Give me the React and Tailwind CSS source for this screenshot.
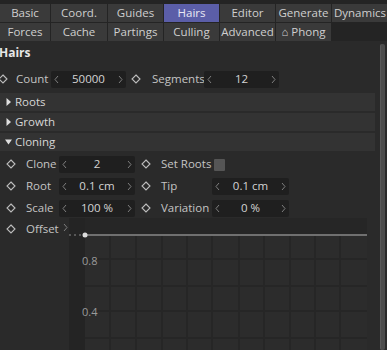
import React from 'react';

const font = { fontFamily: '"Open Sans", "Noto Sans", sans-serif' };

const row1 = [
  { label: 'Basic', w: 'w-[50px]' },
  { label: 'Coord.', w: 'w-[56px]' },
  { label: 'Guides', w: 'w-[55px]' },
  { label: 'Hairs', w: 'w-[55px]', active: true },
  { label: 'Editor', w: 'w-[55px]' },
  { label: 'Generate', w: 'w-[55px]' },
  { label: 'Dynamics', w: 'w-[56px]' },
];

const row2 = [
  { label: 'Forces', w: 'w-[50px]' },
  { label: 'Cache', w: 'w-[56px]' },
  { label: 'Partings', w: 'w-[55px]' },
  { label: 'Culling', w: 'w-[55px]' },
  { label: 'Advanced', w: 'w-[55px]' },
  { label: '\u2302 Phong', w: 'w-[55px]' },
];

function Tab({ label, w, active }) {
  return (
    <div
      className={`${w} h-[18px] shrink-0 flex items-center justify-center text-[11.5px] leading-none ${
        active ? 'bg-[#5b5ea8] text-[#e8e8f4]' : 'bg-[#3a3a3a] text-[#cfcfcf]'
      }`}
    >
      {label}
    </div>
  );
}

function Diamond() {
  return (
    <svg width="10" height="10" viewBox="0 0 10 10" className="shrink-0">
      <path d="M5 1 L9 5 L5 9 L1 5 Z" fill="none" stroke="#bdbdbd" strokeWidth="1.1" />
    </svg>
  );
}

function Chevron({ right }) {
  return (
    <svg width="5" height="9" viewBox="0 0 5 9" className="shrink-0">
      <path d={right ? 'M1 1 L4 4.5 L1 8' : 'M4 1 L1 4.5 L4 8'} fill="none" stroke="#7e7e7e" strokeWidth="1" />
    </svg>
  );
}

function Field({ value, w = 'w-[76px]' }) {
  return (
    <div className={`${w} h-[17px] shrink-0 rounded-[2px] bg-[#1f1f1f] flex items-center justify-between px-[3px] text-[11.5px] text-[#d4d4d4]`}>
      <Chevron />
      <span>{value}</span>
      <Chevron right />
    </div>
  );
}

function Group({ label, open }) {
  return (
    <div className="h-[18px] w-[375px] bg-[#333333] flex items-center pl-[5px] gap-[3px] text-[11.5px] text-[#d6d6d6]">
      <svg width="7" height="8" viewBox="0 0 7 8">
        {open ? <path d="M0 1.5 L7 1.5 L3.5 6.5 Z" fill="#e0e0e0" /> : <path d="M1.5 0 L6 4 L1.5 8 Z" fill="#e0e0e0" />}
      </svg>
      <span>{label}</span>
    </div>
  );
}

function Graph() {
  const vx = [41, 67, 93, 118, 143, 170, 195, 221, 246, 271];
  const hy = [41, 68, 93, 120];
  return (
    <svg width="298" height="133" viewBox="0 0 298 133" className="block">
      <rect x="0" y="0" width="298" height="133" fill="#2c2c2c" />
      <rect x="16" y="0" width="282" height="16" fill="#262626" />
      {vx.map((x) => (
        <rect key={x} x={x - 1} y="18" width="2" height="115" fill="#262626" />
      ))}
      {hy.map((y) => (
        <rect key={y} x="16" y={y - 1} width="282" height="2" fill="#262626" />
      ))}
      <rect x="0" y="0" width="16" height="133" fill="#242424" />
      <line x1="16" y1="17" x2="298" y2="17" stroke="#b4b4b4" strokeWidth="1" />
      <line x1="0" y1="17" x2="13" y2="17" stroke="#8a8a8a" strokeWidth="1" strokeDasharray="2 3" />
      <circle cx="16" cy="17" r="2.5" fill="#dcdcdc" />
      <text x="13" y="47" fill="#9a9a9a" fontSize="11" style={font}>0.8</text>
      <text x="13" y="98" fill="#9a9a9a" fontSize="11" style={font}>0.4</text>
    </svg>
  );
}

export default function App() {
  return (
    <div className="w-[387px] h-[350px] overflow-hidden bg-[#2a2a2a] text-[#c4c4c4] relative" style={font}>
      {/* tabs */}
      <div className="bg-[#242424] pt-[4px] flex flex-col gap-px">
        <div className="flex gap-px">
          {row1.map((t) => <Tab key={t.label} {...t} />)}
        </div>
        <div className="flex gap-px">
          {row2.map((t) => <Tab key={t.label} {...t} />)}
        </div>
      </div>

      {/* scrollbar */}
      <div className="absolute right-[2px] top-[44px] bottom-0 w-[5px] rounded-[2px] bg-[#4c4c4c] border-l border-[#5a5a5a]" />

      <div className="pt-[3px]">
        <div className="h-[18px] flex items-center -ml-[1px] text-[12px] font-bold text-[#e6e6e6]">Hairs</div>

        {/* count row */}
        <div className="h-[22px] flex items-center -ml-[2px] mt-[6px] text-[11.5px]">
          <Diamond />
          <span className="ml-[8px] w-[35px]">Count</span>
          <Field value="50000" w="w-[75px]" />
          <span className="ml-[5px]"><Diamond /></span>
          <span className="ml-[11px] w-[52px]">Segments</span>
          <Field value="12" w="w-[75px]" />
        </div>

        <div className="flex flex-col gap-[2px] mt-[3px]">
          <Group label="Roots" />
          <Group label="Growth" />
          <Group label="Cloning" open />
        </div>

        <div className="flex flex-col mt-[2px] text-[11.5px]">
          <div className="h-[22px] flex items-center pl-[6px]">
            <Diamond />
            <span className="ml-[10px] w-[33px]">Clone</span>
            <Field value="2" />
            <span className="ml-[6px]"><Diamond /></span>
            <span className="ml-[10px] w-[53px]">Set Roots</span>
            <div className="w-[11px] h-[12px] mt-[2px] rounded-[1px] bg-[#555555]" />
          </div>
          <div className="h-[22px] flex items-center pl-[6px]">
            <Diamond />
            <span className="ml-[10px] w-[33px]">Root</span>
            <Field value="0.1 cm" />
            <span className="ml-[6px]"><Diamond /></span>
            <span className="ml-[10px] w-[51px]">Tip</span>
            <Field value="0.1 cm" w="w-[77px]" />
          </div>
          <div className="h-[22px] flex items-center pl-[6px]">
            <Diamond />
            <span className="ml-[10px] w-[33px]">Scale</span>
            <Field value="100 %" />
            <span className="ml-[6px]"><Diamond /></span>
            <span className="ml-[10px] w-[51px]">Variation</span>
            <Field value="0 %" w="w-[77px]" />
          </div>
          <div className="flex items-start pl-[6px]">
            <div className="h-[20px] flex items-center">
              <Diamond />
              <span className="ml-[10px] w-[37px]">Offset</span>
              <span className="-mt-[4px] w-[6px]"><Chevron right /></span>
            </div>
            <div className="mt-[-1px]">
              <Graph />
            </div>
          </div>
        </div>
      </div>
    </div>
  );
}
